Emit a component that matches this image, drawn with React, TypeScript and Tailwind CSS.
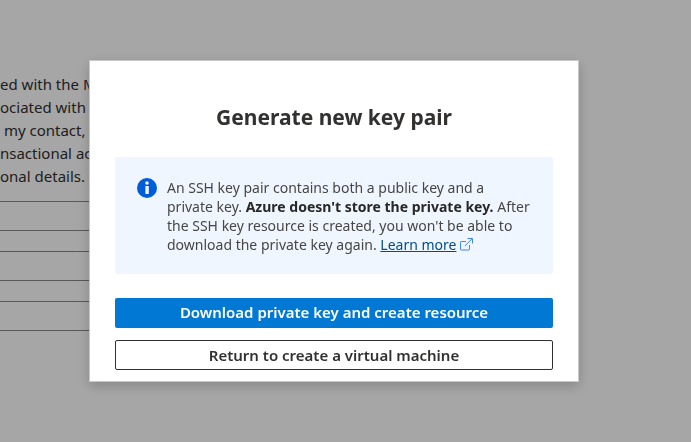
import type { ReactNode } from 'react';

function InfoIcon() {
  return (
    <svg viewBox="0 0 20 20" className="w-5 h-5 shrink-0" aria-hidden="true">
      <circle cx="10" cy="10" r="10" fill="#015cda" />
      <circle cx="10" cy="5" r="1.8" fill="#f0f6ff" />
      <path d="M8 8h3.8v8H8.4V8z" fill="#f0f6ff" />
    </svg>
  );
}

function ExternalLinkIcon() {
  return (
    <svg
      viewBox="0 0 13 13"
      className="inline-block w-[13px] h-[13px] ml-1 align-[-1px]"
      fill="none"
      stroke="#3f86f0"
      aria-hidden="true"
    >
      <path d="M6 3.5H1.2a.7.7 0 0 0-.7.7v7.1c0 .4.3.7.7.7h7.6c.4 0 .7-.3.7-.7V7" />
      <path d="M4.8 8 12 .9M7.5.5h5v5" />
    </svg>
  );
}

const termsLines = ['ed with the MS', 'ociated with the', ' my contact, pa', 'nsactional activ', 'onal details. '];

const contactFields = ['Name', 'Email address', 'Phone number'];

function CreateForm() {
  return (
    <div className="pt-[73px] overflow-hidden">
      <p className="text-[15px] leading-[23px] text-[#323130] whitespace-pre">
        {termsLines.map((line) => (
          <span key={line} className="block">
            {line}
          </span>
        ))}
      </p>
      <div className="mt-[13px] flex flex-col gap-5">
        {contactFields.map((field) => (
          <input
            key={field}
            type="text"
            aria-label={field}
            className="w-1/2 h-[30px] border-y border-[#8a8886] bg-transparent"
          />
        ))}
      </div>
    </div>
  );
}

function InfoBox({ children }: { children: ReactNode }) {
  return (
    <div className="flex gap-2.5 rounded-xs bg-[#eff6ff] pt-[21px] pb-5 pl-[22px] pr-4">
      <InfoIcon />
      <p className="text-sm leading-[19px] text-[#484644]">{children}</p>
    </div>
  );
}

function KeyPairDialog() {
  return (
    <div
      role="dialog"
      aria-modal="true"
      aria-labelledby="key-pair-title"
      className="w-full max-w-[490px] border border-[#c8c8c8] bg-white px-[25px] pt-[42px] pb-[11px] shadow-[0_4px_12px_rgba(0,0,0,0.2)]"
    >
      <h1 id="key-pair-title" className="text-center text-[21px] leading-7 font-bold text-[#323130]">
        Generate new key pair
      </h1>
      <div className="mt-[26px]">
        <InfoBox>
          An SSH key pair contains both a public key and a
          <br />
          private key. <strong className="font-bold text-[#292827]">Azure doesn't store the private key.</strong> After
          <br />
          the SSH key resource is created, you won't be able to
          <br />
          download the private key again.{' '}
          <a href="#" className="text-[#004e8c] underline">
            Learn more
          </a>
          <ExternalLinkIcon />
        </InfoBox>
      </div>
      <div className="mt-6 flex flex-col gap-3">
        <button
          type="button"
          className="h-[30px] rounded-xs bg-[#0078d4] pb-0.5 text-[15px] leading-5 font-semibold text-white"
        >
          Download private key and create resource
        </button>
        <button
          type="button"
          className="h-[30px] rounded-xs border border-[#323130] bg-white text-[15px] leading-5 font-semibold text-[#323130]"
        >
          Return to create a virtual machine
        </button>
      </div>
    </div>
  );
}

export default function App() {
  return (
    <div className="min-h-screen bg-white font-['Segoe_UI','Noto_Sans',sans-serif]">
      <CreateForm />
      <div className="fixed inset-0 flex items-start justify-center overflow-hidden bg-black/35 pt-15 pr-[23px]">
        <KeyPairDialog />
      </div>
    </div>
  );
}
